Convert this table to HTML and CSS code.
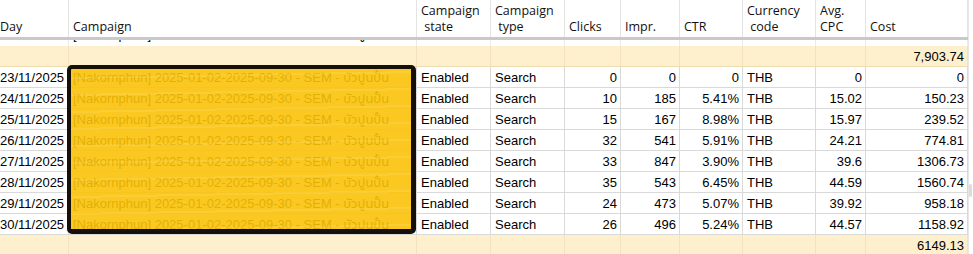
FILE: index.html
```html
<!DOCTYPE html>
<html>
<head>
<meta charset="utf-8">
<link rel="stylesheet" href="styles.css">
</head>
<body>
<div class="sheet">
  <div class="grid">
    <div class="row head">
      <div class="c day">Day</div>
      <div class="c">Campaign</div>
      <div class="c">Campaign<br>&nbsp;state</div>
      <div class="c">Campaign<br>&nbsp;type</div>
      <div class="c">Clicks</div>
      <div class="c">Impr.</div>
      <div class="c">CTR</div>
      <div class="c">Currency<br>&nbsp;code</div>
      <div class="c">Avg.<br>CPC</div>
      <div class="c">Cost</div>
    </div>
    <div class="sep"></div>
    <div class="row partial">
      <div class="c day"></div>
      <div class="c camp"><span class="peek">[Nakornphun] 2025-01-02-2025-09-30 - SEM - บัวปูนปั้น</span></div>
      <div class="c"></div><div class="c"></div><div class="c"></div><div class="c"></div>
      <div class="c"></div><div class="c"></div><div class="c"></div><div class="c"></div>
    </div>
    <div class="row total">
      <div class="c day"></div><div class="c"></div><div class="c"></div><div class="c"></div>
      <div class="c"></div><div class="c"></div><div class="c"></div><div class="c"></div>
      <div class="c"></div><div class="c num">7,903.74</div>
    </div>

    <div class="row"><div class="c day">23/11/2025</div><div class="c camp">[Nakornphun] 2025-01-02-2025-09-30 - SEM - บัวปูนปั้น</div><div class="c">Enabled</div><div class="c">Search</div><div class="c num">0</div><div class="c num">0</div><div class="c num">0</div><div class="c">THB</div><div class="c num">0</div><div class="c num">0</div></div>
    <div class="row"><div class="c day">24/11/2025</div><div class="c camp">[Nakornphun] 2025-01-02-2025-09-30 - SEM - บัวปูนปั้น</div><div class="c">Enabled</div><div class="c">Search</div><div class="c num">10</div><div class="c num">185</div><div class="c num">5.41%</div><div class="c">THB</div><div class="c num">15.02</div><div class="c num">150.23</div></div>
    <div class="row"><div class="c day">25/11/2025</div><div class="c camp">[Nakornphun] 2025-01-02-2025-09-30 - SEM - บัวปูนปั้น</div><div class="c">Enabled</div><div class="c">Search</div><div class="c num">15</div><div class="c num">167</div><div class="c num">8.98%</div><div class="c">THB</div><div class="c num">15.97</div><div class="c num">239.52</div></div>
    <div class="row"><div class="c day">26/11/2025</div><div class="c camp">[Nakornphun] 2025-01-02-2025-09-30 - SEM - บัวปูนปั้น</div><div class="c">Enabled</div><div class="c">Search</div><div class="c num">32</div><div class="c num">541</div><div class="c num">5.91%</div><div class="c">THB</div><div class="c num">24.21</div><div class="c num">774.81</div></div>
    <div class="row"><div class="c day">27/11/2025</div><div class="c camp">[Nakornphun] 2025-01-02-2025-09-30 - SEM - บัวปูนปั้น</div><div class="c">Enabled</div><div class="c">Search</div><div class="c num">33</div><div class="c num">847</div><div class="c num">3.90%</div><div class="c">THB</div><div class="c num">39.6</div><div class="c num">1306.73</div></div>
    <div class="row"><div class="c day">28/11/2025</div><div class="c camp">[Nakornphun] 2025-01-02-2025-09-30 - SEM - บัวปูนปั้น</div><div class="c">Enabled</div><div class="c">Search</div><div class="c num">35</div><div class="c num">543</div><div class="c num">6.45%</div><div class="c">THB</div><div class="c num">44.59</div><div class="c num">1560.74</div></div>
    <div class="row"><div class="c day">29/11/2025</div><div class="c camp">[Nakornphun] 2025-01-02-2025-09-30 - SEM - บัวปูนปั้น</div><div class="c">Enabled</div><div class="c">Search</div><div class="c num">24</div><div class="c num">473</div><div class="c num">5.07%</div><div class="c">THB</div><div class="c num">39.92</div><div class="c num">958.18</div></div>
    <div class="row"><div class="c day">30/11/2025</div><div class="c camp">[Nakornphun] 2025-01-02-2025-09-30 - SEM - บัวปูนปั้น</div><div class="c">Enabled</div><div class="c">Search</div><div class="c num">26</div><div class="c num">496</div><div class="c num">5.24%</div><div class="c">THB</div><div class="c num">44.57</div><div class="c num">1158.92</div></div>

    <div class="row total">
      <div class="c day"></div><div class="c"></div><div class="c"></div><div class="c"></div>
      <div class="c"></div><div class="c"></div><div class="c"></div><div class="c"></div>
      <div class="c"></div><div class="c num">6149.13</div>
    </div>

    <div class="redact"></div>
  </div>
  <div class="scroll"><div class="thumb"></div></div>
</div>
</body>
</html>
```
FILE: styles.css
```css
html, body {
  margin: 0;
  padding: 0;
  background: #fff;
}
body {
  font-family: "Liberation Sans", Arial, "Noto Sans Thai", sans-serif;
  font-size: 13px;
  color: #000;
  overflow: hidden;
}
.sheet {
  display: flex;
  width: 973px;
  height: 254px;
  overflow: hidden;
}
.grid {
  position: relative;
  width: 968px;
  flex: none;
}
.row {
  display: grid;
  grid-template-columns: 69px 348px 74px 74px 56px 59px 63px 73px 50px 102px;
  height: 21px;
}
.c {
  box-sizing: border-box;
  border-right: 1px solid #d9d9d9;
  border-bottom: 1px solid #d9d9d9;
  padding: 1px 4px 0 4px;
  line-height: 20px;
  white-space: nowrap;
  overflow: hidden;
}
.c.day {
  padding-left: 0;
  padding-right: 0;
}
.c.num {
  text-align: right;
  padding-right: 3px;
}
.c.camp {
  padding-left: 4px;
}
.head {
  height: 37px;
}
.head .c {
  display: flex;
  flex-direction: column;
  justify-content: flex-end;
  border-bottom: none;
  border-right-color: #e3e3e3;
  font-family: "Open Sans", "Noto Sans", sans-serif;
  font-size: 12.5px;
  line-height: 16px;
  padding-top: 0;
  padding-bottom: 2px;
  color: #111;
}
.head .c.day {
  padding-left: 0;
}
.sep {
  height: 3px;
  background: #c9c9c9;
}
.partial {
  height: 6px;
}
.partial .c {
  padding-top: 0;
  border-bottom: none;
  border-right-color: #ebebeb;
  line-height: 20px;
}
.peek {
  display: block;
  height: 20px;
  margin-top: -15px;
}
.total .c {
  background: #fef0cd;
  border-right-color: #f3e2bb;
  border-bottom-color: #efdcb1;
}
.redact {
  position: absolute;
  left: 67px;
  top: 65px;
  width: 349px;
  height: 169px;
  box-sizing: border-box;
  border-style: solid;
  border-color: #15110a;
  border-width: 4px 5px 5px 4px;
  border-radius: 5px;
  background-color: rgba(249, 194, 8, 0.9);
  background-image: repeating-linear-gradient(179deg, rgba(255,255,255,0) 0 8px, rgba(255,255,255,0.10) 8px 10px, rgba(255,255,255,0) 10px 17px);
}
.scroll {
  width: 5px;
  flex: none;
  border-left: 1px solid #e6e6e6;
  box-sizing: border-box;
}
.thumb {
  margin-top: 184px;
  height: 13px;
  width: 3px;
  background: #dcdcdc;
  border-radius: 2px;
}
```
